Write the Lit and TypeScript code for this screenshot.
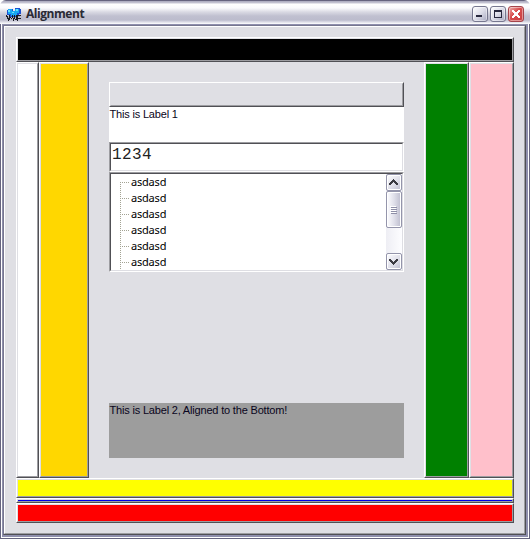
import { LitElement, html, css, svg } from "lit";
import { customElement, property } from "lit/decorators.js";

@customElement("title-bar")
class TitleBar extends LitElement {
  static styles = css`
    :host { display: flex; align-items: center; height: 24px; box-sizing: border-box; padding: 3px 6px 0 6px;
      background: linear-gradient(#66647f 0, #66647f 1px, #a9a8bd 1px, #c9c8d6 3px, #ffffff 4px, #fafafd 8px, #d9d9e3 12px, #c0c0d0 16px, #bcbccd 20px, #dedee8 22px, #fff 24px);
      border-radius: 6px 6px 0 0; }
    .logo { display: block; width: 16px; height: 16px; margin-top: 2px; }
    .name { flex: 1; margin-left: 4px; font: 700 12px/18px "Open Sans", "Noto Sans", sans-serif; letter-spacing: -0.45px; color: #2a2a35; white-space: nowrap; }
    .buttons { display: flex; gap: 2px; }
    .btn { width: 16px; height: 16px; box-sizing: border-box; border: 1px solid #76778f; border-radius: 3px;
      background: linear-gradient(135deg, #fff, #dcdce8 50%, #a5a6bf); box-shadow: inset 0 0 0 1px #ffffff70; margin-top: 1px; }
    .close { background: linear-gradient(135deg, #eeb0ac, #d84c4c 45%, #c73d40); border-color: #a5444b; }
    .btn svg { display: block; width: 14px; height: 14px; }
  `;
  render() {
    return html`
      <svg class="logo" viewBox="0 0 16 16" shape-rendering="crispEdges">
        <path fill="#1a4fd0" d="M2 2h5v2h2V1h5v1h1v5h-2v3H3V8H1V3h1z"/>
        <path fill="#18a8f4" d="M2 2h4v2h3V2h4v4h-2v3H5V7H2z"/>
        <path fill="#65e5ff" d="M2 3h2v2H2zM10 2h2v2h-2zM6 5h2v1H6z"/>
        <path fill="#1a1a24" d="M0 8h1v1h1v1h1V8h1v2h1v1H4v2H3v1H2v-2H1v-2H0zM6 8h1v2h1V8h1v4H8v2H7v-3H6v2H5v-2h1zM10 8h5v1h-3v2h3v1h-3v2h-1v-1H9v-1h1z"/>
        <path fill="#aaa" d="M2 10h1v1H2zM7 10h1v1H7zM12 9h2v1h-2zM5 12h1v1H5zM9 10h1v1H9z"/>
      </svg>
      <span class="name">Alignment</span>
      <div class="buttons">
        <div class="btn"><svg viewBox="0 0 14 14" shape-rendering="crispEdges"><path fill="#28283e" d="M3 8h6v2H3z"/></svg></div>
        <div class="btn"><svg viewBox="0 0 14 14" shape-rendering="crispEdges"><path fill="#28283e" fill-rule="evenodd" d="M3 3h8v8H3zM4 5v5h6V5z"/></svg></div>
        <div class="btn close"><svg viewBox="0 0 14 14" shape-rendering="crispEdges"><path fill="#fff" d="M3 3h2v1h1v1h2V4h1V3h2v2h-1v1H9v2h1v1h1v2H9v-1H8V9H6v1H5v1H3V9h1V8h1V6H4V5H3z"/></svg></div>
      </div>`;
  }
}

@customElement("tree-list")
class TreeList extends LitElement {
  @property({ attribute: false }) items: string[] = [];
  static styles = css`
    :host { display: flex; height: 100px; box-sizing: border-box; background: #fff; border: 1px solid; border-color: #9d9da1 #fff #fff #9d9da1; }
    .inner { display: flex; flex: 1; min-width: 0; border: 1px solid; border-color: #505055 #dedee3 #dedee3 #505055; }
    .rows { flex: 1; overflow: hidden; padding-left: 9px; }
    .row { display: flex; height: 16px; font: 11px/16px "Noto Sans", sans-serif; color: #000; letter-spacing: -0.2px; }
    .twig { display: block; width: 11px; height: 16px; }
    .bar { width: 16px; display: flex; flex-direction: column; background: linear-gradient(90deg, #eeeef4, #fdfdff); }
    .arrow, .thumb { box-sizing: border-box; border: 1px solid #9495ab; border-radius: 2px; box-shadow: inset 0 0 0 1px #fff;
      background: linear-gradient(90deg, #fdfdff, #e0e0ea 50%, #bdbdce); width: 16px; }
    .arrow { height: 17px; background: linear-gradient(135deg, #fdfdff, #dddde8 60%, #bdbdce); }
    .thumb { height: 37px; display: flex; align-items: center; justify-content: center; }
    .gap { flex: 1; }
    svg { display: block; }
  `;
  private arrow(down: boolean) {
    const d = down
      ? "M2 5h2v1h1v1h1v1h1V7h1V6h1V5h2v2h-1v1H9v1H8v1H7v1H6v-1H5V9H4V8H3V7H2z"
      : "M6 4h1v1h1v1h1v1h1v1h1v2H9V9H8V8H7V7H6v1H5v1H4v1H2V8h1V7h1V6h1V5h1z";
    return html`<div class="arrow"><svg width="14" height="15" shape-rendering="crispEdges">${svg`<path fill="#3b3b42" d=${d}/>`}</svg></div>`;
  }
  render() {
    return html`<div class="inner">
      <div class="rows">${this.items.map((t, i) => html`<div class="row">
        <svg class="twig" shape-rendering="crispEdges">
          ${svg`<path fill="none" stroke="#a3a394" stroke-dasharray="1 1" d=${i ? "M.5 0V16M0 8.5H10" : "M.5 8V16M0 8.5H10"}/>`}
        </svg><span>${t}</span></div>`)}</div>
      <div class="bar">${this.arrow(false)}
        <div class="thumb"><svg width="8" height="8" shape-rendering="crispEdges"><path fill="#fff" d="M0 0h6v1H0zM0 2h6v1H0zM0 4h6v1H0zM0 6h6v1H0z"/><path fill="#8e8fa7" d="M1 1h6v1H1zM1 3h6v1H1zM1 5h6v1H1zM1 7h6v1H1z"/></svg></div>
        <div class="gap"></div>${this.arrow(true)}</div>
    </div>`;
  }
}

@customElement("app-root")
class AppRoot extends LitElement {
  static styles = css`
    :host { display: block; width: 530px; height: 539px; background: #fff; overflow: hidden; }
    .window { height: 539px; display: flex; flex-direction: column; }
    .frame { flex: 1; display: flex; border: 1px solid #66647f; border-top: 0; background: #fff; padding: 0 1px 1px; }
    .rim { flex: 1; display: flex; border: 1px solid #8f8fad; border-right-width: 2px; border-bottom-width: 2px; }
    .edge { flex: 1; display: flex; border: 1px solid; border-color: #77778f #505055 #505055 #77778f; }
    .client { flex: 1; box-sizing: border-box; border: 1px solid; border-color: #fff #9d9da1 #9d9da1 #fff; background: #dfdfe4;
      display: flex; flex-direction: column; padding: 10px 10px 0 11px; }
    .panel { box-sizing: border-box; border: 1px solid; border-color: #fff #505055 #505055 #fff; display: flex; }
    .panel::before { content: ""; flex: 1; border: 1px solid; border-color: #dfdfe4 #9d9da1 #9d9da1 #dfdfe4; }
    .black { height: 25px; background: #000; }
    .middle { height: 416px; display: flex; }
    .white { width: 23px; background: #fff; }
    .gold { width: 50px; background: #ffd700; }
    .green { width: 45px; background: #008000; }
    .pink { width: 45px; background: #ffc0cb; }
    .yellow { height: 20px; background: #ff0; }
    .blue { height: 5px; background: #0000e8; }
    .red { height: 20px; background: #f00; }
    .body { flex: 1; display: flex; flex-direction: column; padding: 20px; }
    .gray { height: 25px; background: #dfdfe4; }
    .label { height: 35px; box-sizing: border-box; background: #fff; color: #0a0520; font: 11px/14px "Liberation Sans", sans-serif; letter-spacing: -0.18px; padding-left: 0.5px; }
    .bottom { height: 55px; margin-top: auto; background: #9d9d9d; }
    .edit { height: 30px; box-sizing: border-box; border: 1px solid; border-color: #9d9da1 #fff #fff #9d9da1; display: flex; }
    .value { flex: 1; border: 1px solid; border-color: #505055 #dedee3 #dedee3 #505055; background: #fff; font: 16px/23px "Liberation Mono", monospace; letter-spacing: 0.4px; padding-left: 1px; color: #222; }
  `;
  render() {
    return html`<div class="window">
      <title-bar></title-bar>
      <div class="frame"><div class="rim"><div class="edge"><div class="client">
        <div class="panel black"></div>
        <div class="middle">
          <div class="panel white"></div>
          <div class="panel gold"></div>
          <div class="body">
            <div class="panel gray"></div>
            <div class="label">This is Label 1</div>
            <div class="edit"><div class="value">1234</div></div>
            <tree-list .items=${Array(6).fill("asdasd")}></tree-list>
            <div class="label bottom">This is Label 2, Aligned to the Bottom!</div>
          </div>
          <div class="panel green"></div>
          <div class="panel pink"></div>
        </div>
        <div class="panel yellow"></div>
        <div class="panel blue"></div>
        <div class="panel red"></div>
      </div></div></div></div>
    </div>`;
  }
}
